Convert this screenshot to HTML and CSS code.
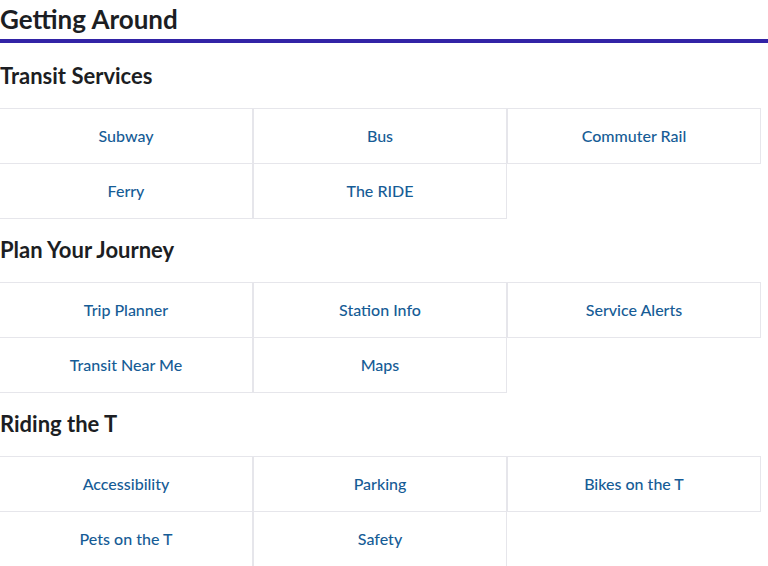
FILE: index.html
```html
<!DOCTYPE html>
<html lang="en">
<head>
<meta charset="utf-8">
<title>Getting Around</title>
<link rel="stylesheet" href="styles.css">
</head>
<body>
<main class="page">
  <h1 class="page-title">Getting Around</h1>

  <section class="group">
    <h2 class="group-title">Transit Services</h2>
    <div class="links">
      <a class="link" href="#">Subway</a>
      <a class="link" href="#">Bus</a>
      <a class="link" href="#">Commuter Rail</a>
      <a class="link" href="#">Ferry</a>
      <a class="link" href="#">The RIDE</a>
    </div>
  </section>

  <section class="group">
    <h2 class="group-title">Plan Your Journey</h2>
    <div class="links">
      <a class="link" href="#">Trip Planner</a>
      <a class="link" href="#">Station Info</a>
      <a class="link" href="#">Service Alerts</a>
      <a class="link" href="#">Transit Near Me</a>
      <a class="link" href="#">Maps</a>
    </div>
  </section>

  <section class="group">
    <h2 class="group-title">Riding the T</h2>
    <div class="links">
      <a class="link" href="#">Accessibility</a>
      <a class="link" href="#">Parking</a>
      <a class="link" href="#">Bikes on the T</a>
      <a class="link" href="#">Pets on the T</a>
      <a class="link" href="#">Safety</a>
    </div>
  </section>
</main>
</body>
</html>
```

FILE: styles.css
```css
html, body {
  margin: 0;
  padding: 0;
  background: #ffffff;
}

body {
  font-family: Lato, "Liberation Sans", sans-serif;
  color: #1c1e23;
}

.page {
  width: 768px;
  overflow: hidden;
}

.page-title {
  margin: 0;
  padding: 2px 0 3px;
  font-size: 26px;
  line-height: 34px;
  font-weight: 700;
  border-bottom: 4px solid #3223a6;
}

.group-title {
  margin: 19px 0 18px;
  font-size: 22px;
  line-height: 28px;
  font-weight: 700;
}

.group + .group .group-title {
  margin-top: 18px;
}

.links {
  display: grid;
  grid-template-columns: repeat(3, 254px);
  grid-auto-rows: 55px;
  width: 762px;
  margin-left: -1px;
}

.link {
  display: flex;
  align-items: center;
  justify-content: center;
  height: 56px;
  padding-bottom: 2px;
  box-sizing: border-box;
  border: 1px solid #e6e6eb;
  color: #165c96;
  font-size: 16px;
  font-weight: 500;
  text-decoration: none;
}
```
